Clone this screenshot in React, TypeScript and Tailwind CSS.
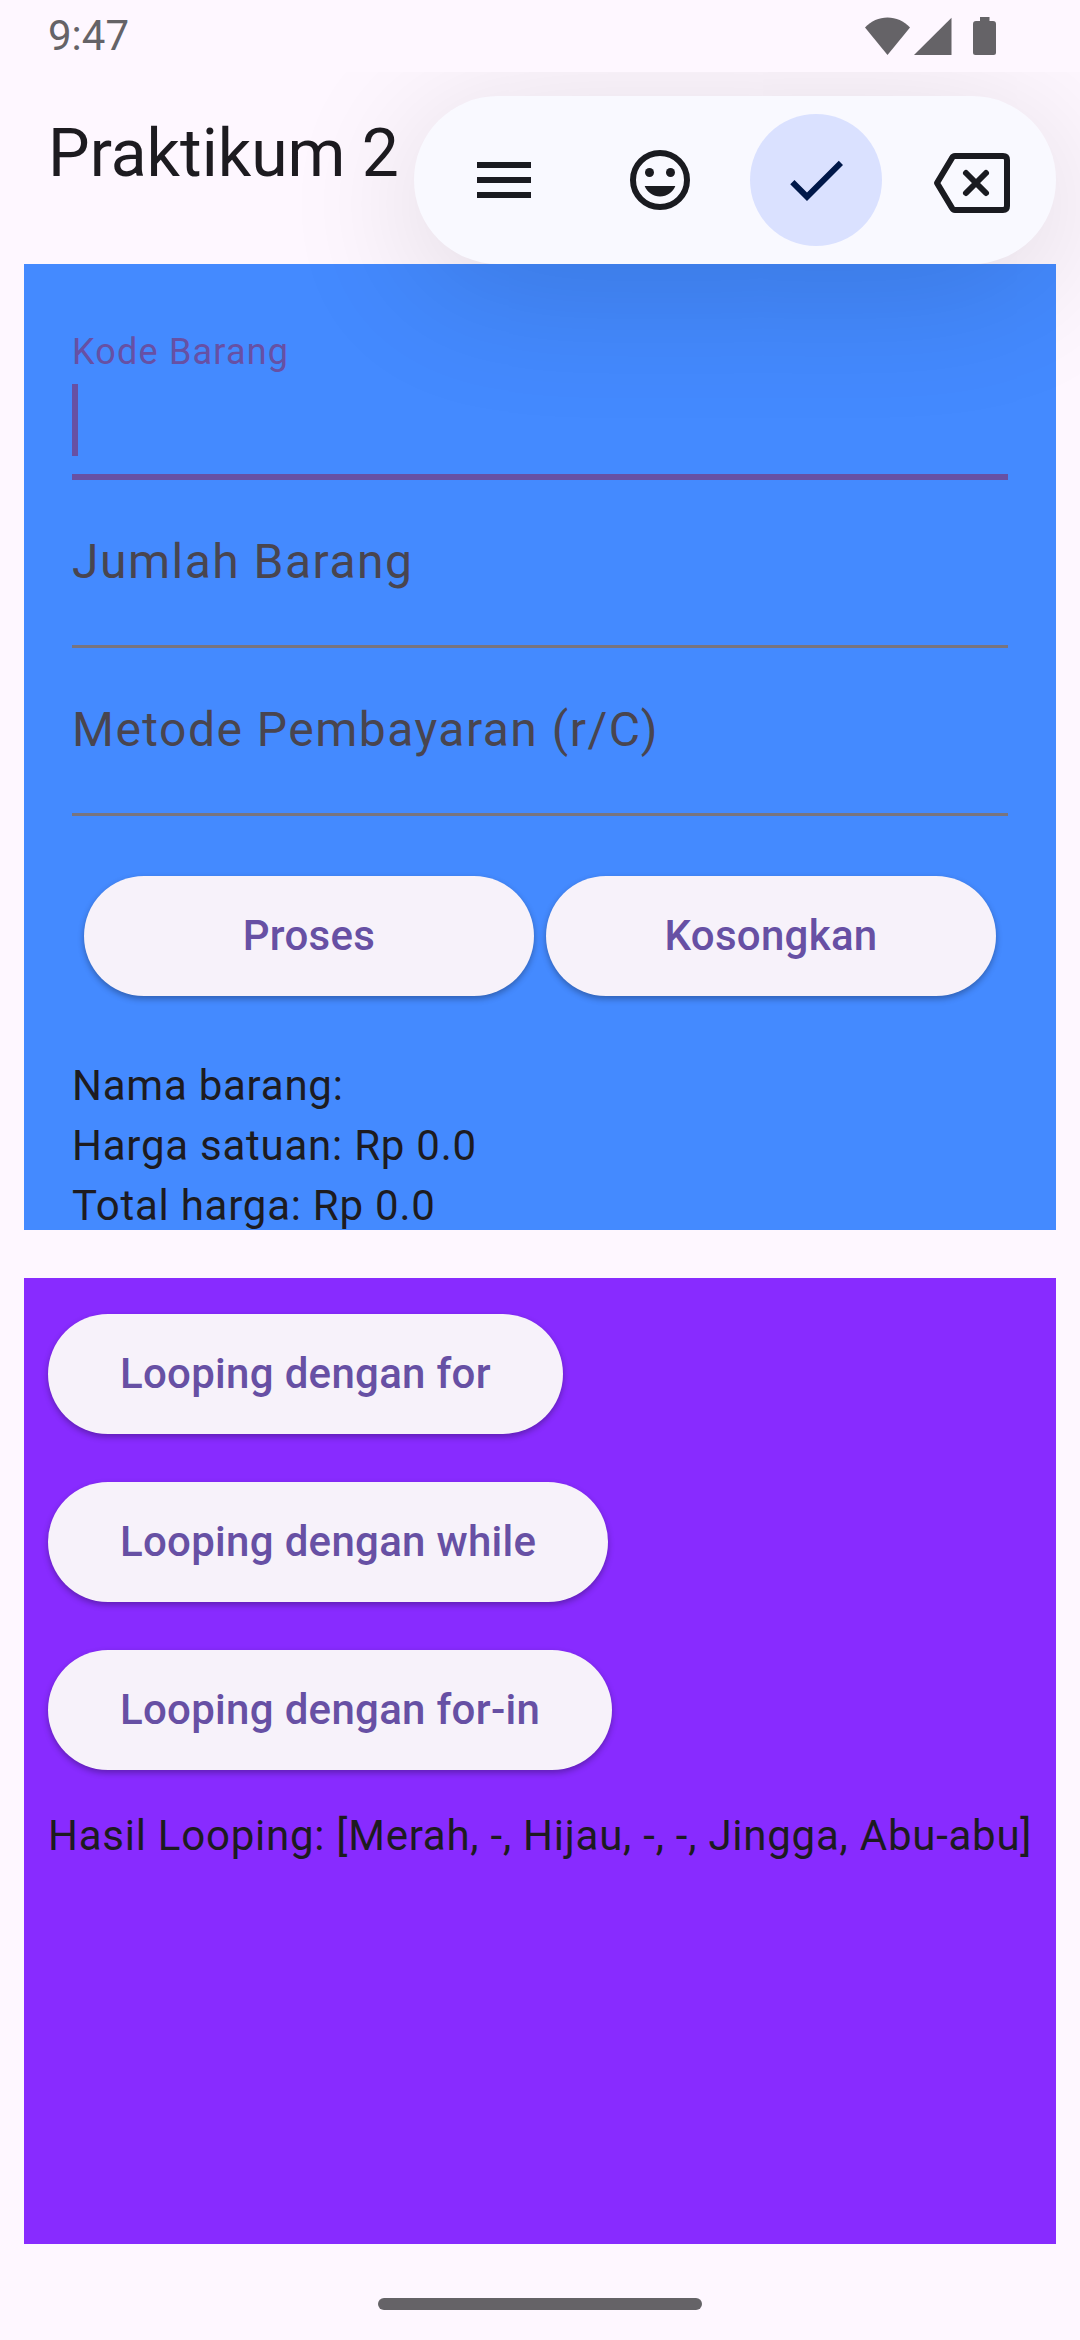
import React, { useState } from "react";

function Field({ id, label, active = false }: { id: string; label: string; active?: boolean }) {
  const [value, setValue] = useState("");
  if (active) {
    return (
      <div className="flex h-[168px] shrink-0 flex-col border-b-[6px] border-[#6750a4] pt-[16px]">
        <label htmlFor={id} className="text-[36px] leading-[48px] tracking-[0.033em] text-[#6750a4]">
          {label}
        </label>
        <div className="mt-[8px] flex h-[72px]">
          <span className="w-[6px] bg-[#6750a4]" />
          <input id={id} value={value} onChange={(e) => setValue(e.target.value)} className="w-full min-w-0 bg-transparent text-[48px] text-[#1d1b20] outline-none" />
        </div>
      </div>
    );
  }
  return (
    <div className="relative h-[168px] shrink-0 border-b-[3px] border-[#79747e] pt-[46px]">
      <label htmlFor={id} className="block text-[48px] leading-[72px] tracking-[0.031em] text-[#49454f]">
        {value === "" ? label : ""}
      </label>
      <input id={id} aria-label={label} value={value} onChange={(e) => setValue(e.target.value)} className="absolute inset-0 w-full bg-transparent text-[48px] text-[#1d1b20] outline-none" />
    </div>
  );
}

const pill =
  "h-[120px] shrink-0 rounded-full bg-[#f7f2fa] text-[42px] leading-[60px] font-medium tracking-[0.007em] text-[#6750a4] shadow-[0_3px_6px_rgba(0,0,0,0.3)]";

const body = "text-[42px] leading-[60px] tracking-[0.018em]";

export default function App() {
  return (
    <div className="flex h-screen flex-col overflow-hidden bg-[#fef7ff] font-[Roboto,sans-serif] text-[#1d1b20]">
      <div className="relative z-20 flex h-[72px] shrink-0 items-center justify-between bg-[#fef7ff] pr-[84px] pl-[48px] text-[#656367]">
        <span className="text-[42px] leading-[48px]">9:47</span>
        <div className="flex items-center">
          <svg width="45" height="38" viewBox="0 0 45 38" fill="currentColor" aria-hidden="true">
            <path d="M22.5 38 0 10.500C6 4 14 .5 22.500.5S39 4 45 10.500Z" />
          </svg>
          <svg className="ml-[4px]" width="38" height="38" viewBox="0 0 38 38" fill="currentColor" aria-hidden="true">
            <path d="M37.500.8V38H0Z" />
          </svg>
          <svg className="ml-[21px]" width="23" height="38" viewBox="0 0 23 38" fill="currentColor" aria-hidden="true">
            <path d="M7 0h9.500v4H20q3 0 3 3v28.500q0 2.500-2.500 2.500h-18Q0 38 0 35.500V7q0-3 3-3h4Z" />
          </svg>
        </div>
      </div>

      <header className="relative z-10 flex h-[192px] shrink-0 items-start pt-[40px] pl-[48px]">
        <h1 className="text-[66px] leading-[84px]">Praktikum 2</h1>
        <div className="absolute top-[24px] right-[24px] grid h-[168px] w-[642px] grid-cols-4 place-items-center rounded-full bg-[#f9f9ff] pr-[6px] pl-[12px] text-[#1a1b20] shadow-[0_24px_144px_rgba(0,0,0,0.14)]">
          <button aria-label="Menu" className="flex size-[132px] items-center justify-center">
            <svg width="72" height="72" viewBox="0 0 24 24" fill="currentColor">
              <path d="M3 6h18v2H3zM3 11h18v2H3zM3 16h18v2H3z" />
            </svg>
          </button>
          <button aria-label="Emoji" className="flex size-[132px] items-center justify-center">
            <svg width="72" height="72" viewBox="0 0 24 24" fill="currentColor">
              <circle cx="12" cy="12" r="9" fill="none" stroke="currentColor" strokeWidth="2" />
              <circle cx="8.500" cy="9.500" r="1.500" />
              <circle cx="15.500" cy="9.500" r="1.500" />
              <path d="M12 17.500c2.330 0 4.310-1.460 5.110-3.500H6.890c.8 2.040 2.780 3.500 5.110 3.500z" />
            </svg>
          </button>
          <button aria-label="Enter" className="flex size-[132px] items-center justify-center rounded-full bg-[#dae1ff] text-[#001849]">
            <svg width="72" height="72" viewBox="0 0 24 24" fill="currentColor">
              <path d="M9 16.170 4.830 12l-1.420 1.410L9 19 21 7l-1.410-1.410z" />
            </svg>
          </button>
          <button aria-label="Backspace" className="flex size-[132px] items-center justify-center">
            <svg width="78" height="66" viewBox="0 0 78 66" fill="none" stroke="currentColor" strokeWidth="6">
              <path d="M22 9h48q4 0 4 4v46q0 4-4 4H22q-2 0-3-2L4 36 19 11q1-2 3-2Z" strokeLinejoin="round" />
              <path d="m33 26 20 20M53 26 33 46" strokeLinecap="round" />
            </svg>
          </button>
        </div>
      </header>

      <main className="grid min-h-0 flex-1 grid-rows-2 gap-[48px] px-[24px]">
        <section className="flex flex-col overflow-hidden bg-[#448aff] px-[48px] pt-[48px]">
          <Field id="kode" label="Kode Barang" active />
          <Field id="jumlah" label="Jumlah Barang" />
          <Field id="metode" label="Metode Pembayaran (r/C)" />
          <div className="mt-[60px] flex shrink-0 gap-[12px] px-[12px]">
            <button className={`${pill} flex-1`}>Proses</button>
            <button className={`${pill} flex-1`}>Kosongkan</button>
          </div>
          <div className={`${body} mt-[60px] shrink-0`}>
            <p>Nama barang:</p>
            <p>Harga satuan: Rp 0.0</p>
            <p>Total harga: Rp 0.0</p>
          </div>
        </section>
        <section className="flex flex-col items-start overflow-hidden bg-[#882bff] px-[24px] pt-[36px]">
          <div className="flex flex-col items-start gap-[48px]">
            <button className={`${pill} px-[72px]`}>Looping dengan for</button>
            <button className={`${pill} px-[72px]`}>Looping dengan while</button>
            <button className={`${pill} px-[72px]`}>Looping dengan for-in</button>
          </div>
          <p className={`${body} mt-[36px] whitespace-nowrap`}>Hasil Looping: [Merah, -, Hijau, -, -, Jingga, Abu-abu]</p>
        </section>
      </main>

      <footer className="flex h-[96px] shrink-0 justify-center pt-[54px]">
        <div className="h-[12px] w-[324px] rounded-full bg-[#656367]" />
      </footer>
    </div>
  );
}
